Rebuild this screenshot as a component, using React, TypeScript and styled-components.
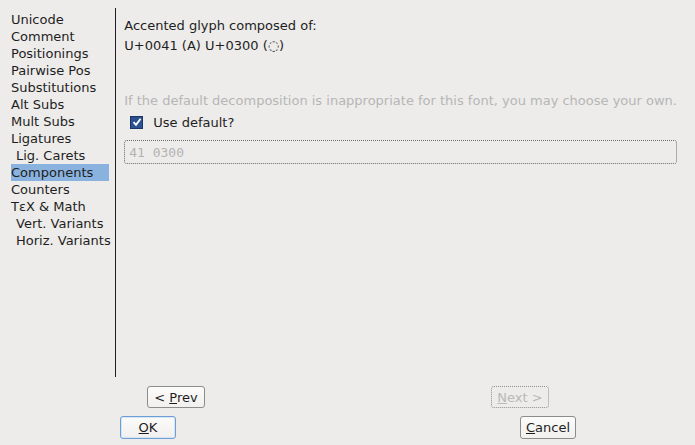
import React from "react";
import styled, { createGlobalStyle } from "styled-components";

const GlobalStyle = createGlobalStyle`
  html, body {
    margin: 0;
    padding: 0;
    background: #edecea;
  }
  body {
    font-family: "DejaVu Sans", "Liberation Sans", sans-serif;
    font-size: 13px;
    color: #1e1e1e;
  }
`;

const Dialog = styled.div`
  width: 695px;
  height: 445px;
  display: flex;
  flex-direction: column;
  background: #edecea;
  overflow: hidden;
`;

const Main = styled.div`
  display: flex;
  height: 369px;
  padding-top: 8px;
`;

const Sidebar = styled.ul`
  list-style: none;
  margin: 3px 6px 0 11px;
  padding: 0;
  width: 98px;
`;

const NavItem = styled.li<{ $indent?: boolean; $active?: boolean }>`
  height: 17px;
  line-height: 17px;
  white-space: nowrap;
  padding-left: ${(p) => (p.$indent ? "5px" : "0")};
  background: ${(p) => (p.$active ? "#8ab2df" : "transparent")};
`;

const Separator = styled.div`
  width: 1px;
  background: #1e1e1e;
`;

const Content = styled.div`
  flex: 1;
  margin-left: 9px;
  padding-top: 8px;
  margin-right: 18px;
  display: flex;
  flex-direction: column;
`;

const Line = styled.div`
  height: 20px;
  line-height: 20px;
  white-space: nowrap;
`;

const Hint = styled.div`
  margin-top: 36px;
  height: 17px;
  line-height: 17px;
  color: #b6b6b6;
  white-space: nowrap;
`;

const CheckRow = styled.label`
  display: flex;
  align-items: center;
  gap: 10px;
  margin-top: 3px;
  margin-left: 6px;
  height: 20px;
`;

const CheckBox = styled.span`
  width: 11px;
  height: 11px;
  border: 1px solid #1b3566;
  background: #2b5190;
  display: flex;
  align-items: center;
  justify-content: center;
`;

const Field = styled.div`
  margin-top: 8px;
  height: 22px;
  border: 1px dotted #6a6a6a;
  border-radius: 3px;
  padding-left: 4px;
  display: flex;
  align-items: center;
  font-family: "DejaVu Sans Mono", "Liberation Mono", monospace;
  font-size: 13px;
  color: #b3b3b3;
`;

const ButtonRow = styled.div<{ $left: number; $width: number; $top: number }>`
  display: flex;
  justify-content: space-between;
  margin-left: ${(p) => p.$left}px;
  margin-top: ${(p) => p.$top}px;
  width: ${(p) => p.$width}px;
`;

const Button = styled.button<{ $w: number; $h: number; $focus?: boolean; $disabled?: boolean }>`
  box-sizing: border-box;
  width: ${(p) => p.$w}px;
  height: ${(p) => p.$h}px;
  padding: 0;
  font-family: "DejaVu Sans", "Liberation Sans", sans-serif;
  font-size: 13px;
  border-radius: 3px;
  color: ${(p) => (p.$disabled ? "#b8b8b8" : "#1e1e1e")};
  border: 1px ${(p) => (p.$disabled ? "dotted #8f8f8f" : p.$focus ? "solid #6d9fd6" : "solid #8c8c8c")};
  background: ${(p) => (p.$disabled ? "#edecea" : "linear-gradient(#fbfbfa, #f1f0ee)")};
  box-shadow: ${(p) => (p.$focus ? "inset 0 0 0 1px #d6e4f4" : "none")};
  display: flex;
  align-items: center;
  justify-content: center;
  white-space: pre;
`;

const items: { label: string; indent?: boolean }[] = [
  { label: "Unicode" },
  { label: "Comment" },
  { label: "Positionings" },
  { label: "Pairwise Pos" },
  { label: "Substitutions" },
  { label: "Alt Subs" },
  { label: "Mult Subs" },
  { label: "Ligatures" },
  { label: "Lig. Carets", indent: true },
  { label: "Components" },
  { label: "Counters" },
  { label: "T\u03b5X & Math" },
  { label: "Vert. Variants", indent: true },
  { label: "Horiz. Variants", indent: true },
];

export default function App() {
  return (
    <>
      <GlobalStyle />
      <Dialog>
        <Main>
          <Sidebar>
            {items.map((it) => (
              <NavItem key={it.label} $indent={it.indent} $active={it.label === "Components"}>
                {it.label}
              </NavItem>
            ))}
          </Sidebar>
          <Separator />
          <Content>
            <Line>Accented glyph composed of:</Line>
            <Line>U+0041 (A) U+0300 ({"\u25CC"})</Line>
            <Hint>If the default decomposition is inappropriate for this font, you may choose your own.</Hint>
            <CheckRow>
              <CheckBox>
                <svg width="10" height="10" viewBox="0 0 10 10">
                  <path d="M1.5 5.2 L4 7.8 L8.6 1.8" fill="none" stroke="#fff" strokeWidth="1.8" />
                </svg>
              </CheckBox>
              <span>Use default?</span>
            </CheckRow>
            <Field>41 0300</Field>
          </Content>
        </Main>
        <ButtonRow $left={147} $width={402} $top={9}>
          <Button $w={58} $h={22}>
            {"< "}
            <u>P</u>rev
          </Button>
          <Button $w={58} $h={22} $disabled>
            <u>N</u>ext {">"}
          </Button>
        </ButtonRow>
        <ButtonRow $left={120} $width={456} $top={8}>
          <Button $w={56} $h={23} $focus>
            <u>O</u>K
          </Button>
          <Button $w={56} $h={23}>
            <u>C</u>ancel
          </Button>
        </ButtonRow>
      </Dialog>
    </>
  );
}
